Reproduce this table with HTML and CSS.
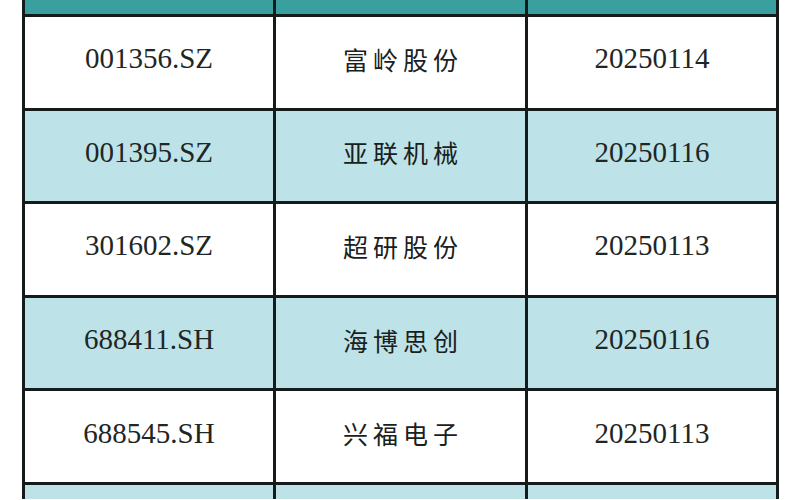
FILE: index.html
```html
<!DOCTYPE html>
<html lang="zh">
<head>
<meta charset="utf-8">
<link rel="stylesheet" href="styles.css">
</head>
<body>
<div class="table">
  <div class="cell head"></div><div class="cell head"></div><div class="cell head"></div>
  <div class="cell">001356.SZ</div><div class="cell cn">富岭股份</div><div class="cell">20250114</div>
  <div class="cell alt">001395.SZ</div><div class="cell alt cn">亚联机械</div><div class="cell alt">20250116</div>
  <div class="cell">301602.SZ</div><div class="cell cn">超研股份</div><div class="cell">20250113</div>
  <div class="cell alt">688411.SH</div><div class="cell alt cn">海博思创</div><div class="cell alt">20250116</div>
  <div class="cell">688545.SH</div><div class="cell cn">兴福电子</div><div class="cell">20250113</div>
  <div class="cell alt tail"></div><div class="cell alt tail"></div><div class="cell alt tail"></div>
</div>
</body>
</html>
```

FILE: styles.css
```css
html, body {
  margin: 0;
  padding: 0;
  background: #ffffff;
  overflow: hidden;
}
body {
  width: 800px;
  height: 500px;
}
.table {
  margin-left: 22px;
  width: 757px;
  display: grid;
  grid-template-columns: 248px 249px 248px;
  grid-template-rows: 14px repeat(5, 90.6px) 14px;
  gap: 3px;
  padding: 0 3px;
  box-sizing: border-box;
  background: #151a1a;
}
.cell {
  background: #ffffff;
  display: flex;
  align-items: center;
  justify-content: center;
  padding-bottom: 7px;
  box-sizing: border-box;
  font-family: "Liberation Serif", "Times New Roman", serif;
  font-size: 29px;
  color: #1e2626;
}
.cell.cn {
  font-family: "Noto Sans CJK SC", "Noto Sans CJK JP", sans-serif;
  font-size: 25px;
  font-weight: 400;
  letter-spacing: 5px;
  padding-left: 5px;
  color: #182020;
}
.cell.alt {
  background: #bde3e8;
}
.cell.head {
  background: #3aa09f;
  padding: 0;
}
.cell.tail {
  padding: 0;
}
```
